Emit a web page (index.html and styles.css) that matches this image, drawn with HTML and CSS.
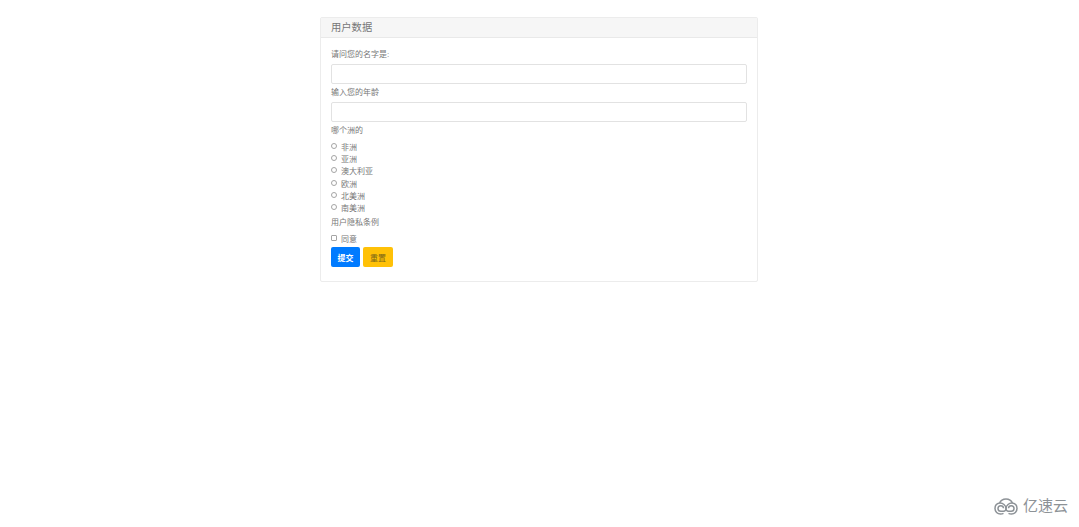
FILE: index.html
```html
<!DOCTYPE html>
<html lang="zh">
<head>
<meta charset="utf-8">
<title>用户数据</title>
<link rel="stylesheet" href="styles.css">
</head>
<body>
<main class="panel">
  <h1 class="panel-head">用户数据</h1>
  <form class="panel-body">
    <label class="field-label first">请问您的名字是:</label>
    <input class="text-input" type="text">
    <label class="field-label">输入您的年龄</label>
    <input class="text-input" type="text">
    <label class="field-label">哪个洲的</label>
    <div class="options">
      <label class="option"><input class="radio" type="radio" name="c"><span>非洲</span></label>
      <label class="option"><input class="radio" type="radio" name="c"><span>亚洲</span></label>
      <label class="option"><input class="radio" type="radio" name="c"><span>澳大利亚</span></label>
      <label class="option"><input class="radio" type="radio" name="c"><span>欧洲</span></label>
      <label class="option"><input class="radio" type="radio" name="c"><span>北美洲</span></label>
      <label class="option"><input class="radio" type="radio" name="c"><span>南美洲</span></label>
    </div>
    <label class="field-label">用户隐私条例</label>
    <div class="options">
      <label class="option"><input class="check" type="checkbox"><span>同意</span></label>
    </div>
    <div class="actions">
      <button class="btn btn-blue" type="submit">提交</button>
      <button class="btn btn-amber" type="reset">重置</button>
    </div>
  </form>
</main>
<div class="brand">
  <svg class="brand-icon" viewBox="0 0 24 17" width="24" height="17" aria-hidden="true">
    <path d="M9.500 15.300C8.600 15.800 7.600 16 6.500 16C3.400 16 1 13.600 1 10.500C1 7.800 3 5.500 5.600 5.100C6.600 2.500 9 1 12 1C15 1 17.400 2.500 18.400 5.100C21 5.500 23 7.800 23 10.500C23 13.600 20.600 16 17.500 16C16.400 16 15.400 15.800 14.500 15.300" fill="none" stroke="#8d9297" stroke-width="1.500"/>
    <path d="M5.600 5.100C8.800 4.700 12 7.500 12 10.500C12 13.600 9.600 13.300 6.800 13.300C5.200 13.300 4 12.100 4 10.500C4 8.900 5.200 7.700 6.800 7.700C8.300 7.700 9.400 8.800 9.500 10.200" fill="none" stroke="#8d9297" stroke-width="1.500"/>
    <path d="M18.400 5.100C15.200 4.700 12 7.500 12 10.500C12 13.600 14.400 13.300 17.200 13.300C18.800 13.300 20 12.100 20 10.500C20 8.900 18.800 7.700 17.200 7.700C15.700 7.700 14.600 8.800 14.500 10.200" fill="none" stroke="#8d9297" stroke-width="1.500"/>
  </svg>
  <span class="brand-name">亿速云</span>
</div>
</body>
</html>
```
FILE: styles.css
```css
* { box-sizing: border-box; }
html, body { height: 100%; }
body {
  margin: 0;
  background: #fff;
  color: #777;
  font-family: "Liberation Sans", "Noto Sans CJK SC", sans-serif;
  font-size: 8px;
  padding-top: 17px;
  position: relative;
  overflow: hidden;
}
.panel {
  width: 438px;
  height: 265px;
  margin-left: 320px;
  border: 1px solid #ececec;
  border-radius: 2px;
}
.panel-head {
  margin: 0;
  height: 20px;
  padding-left: 10px;
  background: #f6f6f6;
  border-bottom: 1px solid #e9e9e9;
  color: #777;
  font-size: 10.300px;
  font-weight: 400;
  line-height: 19px;
}
.panel-body {
  display: flex;
  flex-direction: column;
  padding: 0 10px;
}
.field-label {
  display: block;
  height: 18px;
  line-height: 17px;
  font-size: 8px;
}
.field-label.first { height: 26px; padding-top: 8px; }
.text-input {
  display: block;
  width: 416px;
  height: 20px;
  margin: 0;
  border: 1px solid #e2e2e2;
  border-radius: 2px;
  background: #fff;
}
.options {
  display: flex;
  flex-direction: column;
}
.option {
  display: flex;
  align-items: center;
  height: 12.330px;
  font-size: 8px;
}
.radio, .check {
  appearance: none;
  width: 6px;
  height: 6px;
  margin: 0 4px 1px 0;
  border: 1px solid #a5a5a5;
  background: #fff;
}
.radio { border-radius: 50%; }
.check { border-radius: 1px; }
.actions {
  display: flex;
  gap: 3px;
  margin-top: 3px;
}
.btn {
  height: 20px;
  padding: 0;
  border: 0;
  border-radius: 2px;
  font-family: inherit;
  font-size: 8px;
}
.btn-blue { width: 29px; background: #007bff; color: #fff; font-weight: 700; }
.btn-amber { width: 30px; background: #ffc107; color: #7a6418; }
.brand {
  position: absolute;
  left: 994px;
  top: 496px;
  display: flex;
  align-items: center;
  gap: 5px;
}
.brand-name {
  color: #8d9297;
  font-size: 15px;
  line-height: 20px;
}
```
